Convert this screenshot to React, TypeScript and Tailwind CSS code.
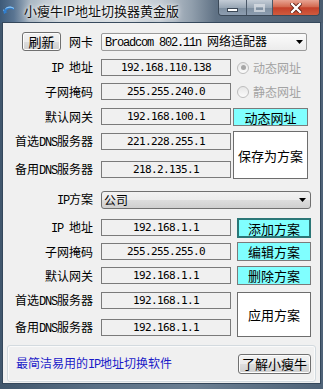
import React from "react";

const Latin = ({ children }: { children: React.ReactNode }) => (
  <span className="font-['Liberation_Mono',monospace] text-[12px] tracking-[-1.2px]">{children}</span>
);

const Field = ({ value }: { value: string }) => (
  <div className="ml-[8px] w-[130px] h-[17px] border border-[#7a7a7a] bg-[#f0f0f0] flex items-center justify-center font-['DejaVu_Sans_Mono',monospace] text-[11px] tracking-[-0.62px] text-black leading-none">
    {value}
  </div>
);

const Row = ({ label, value, className = "" }: { label: React.ReactNode; value: string; className?: string }) => (
  <div className={"flex items-center h-[17px] " + className}>
    <div className="w-[90px] text-right text-[12px] leading-none text-black whitespace-nowrap">{label}</div>
    <Field value={value} />
  </div>
);

const Radio = ({ checked, label, className = "" }: { checked: boolean; label: string; className?: string }) => (
  <div className={"flex items-center h-[17px] " + className}>
    <div className="ml-[4px] w-[12px] h-[12px] rounded-full border border-[#bdbdbd] bg-[linear-gradient(#e6e6e6,#fbfbfb)] flex items-center justify-center">
      {checked && <div className="w-[5px] h-[5px] rounded-full bg-[#a6a6a6]" />}
    </div>
    <div className="ml-[4px] text-[12px] leading-none text-[#a3a3a3] whitespace-nowrap">{label}</div>
  </div>
);

const winBtn =
  "rounded-[3px] border border-[#707070] bg-[linear-gradient(#f2f2f2_0%,#ebebeb_50%,#dddddd_50%,#cfcfcf_100%)] shadow-[inset_0_0_0_1px_#fcfcfc]";

const Arrow = () => (
  <svg width="7" height="4" viewBox="0 0 7 4">
    <polygon points="0,0 7,0 3.5,4" fill="#000" />
  </svg>
);

export default function App() {
  return (
    <div className="w-[323px] h-[389px] overflow-hidden bg-[linear-gradient(90deg,#41576d,#5a7086_30%,#6b7f93_60%,#4f6378)] font-['Noto_Sans_CJK_SC','Noto_Sans',sans-serif]">
      {/* Title bar */}
      <div className="h-[23px] flex items-start bg-[linear-gradient(90deg,#3d5a78_0px,#5a7592_14px,#aab7c3_30px,#d3d9de_60px,#d8dde1_120px,#c3cbd3_160px,#909eac_192px,#5f7184_216px,#4b5d70_323px)]">
        <div className="ml-[3px] mt-[6px] w-[12px] h-[10px]">
          <svg width="12" height="10" viewBox="0 0 12 10">
            <path d="M11 2 C8 -0.5 3 0 1.5 4 L0 3.5 L1 8 L4.5 6 L3 5.5 C4.5 2.5 8 2 11 4 Z" fill="#2f7fd0" />
            <path d="M11 2 C8 -0.5 3 0 1.5 4 L0 3.5 L0.5 5 C3 1.5 8 1 11 3 Z" fill="#8fc6f2" />
          </svg>
        </div>
        <div className="ml-[9px] mt-[3px] text-[13px] leading-[16px] text-[#111] whitespace-nowrap [text-shadow:0_0_6px_#ffffff,0_0_3px_#ffffff]">
          小瘦牛IP地址切换器黄金版
        </div>
        <div className="flex-1" />
        <div className="mr-[3px] flex h-[16px] rounded-b-[4px] border border-t-0 border-[#3b4958] overflow-hidden">
          <div className="w-[28px] h-full bg-[linear-gradient(#c3ccd6,#9aa8b6_50%,#7e8fa0_51%,#8d9db0)] border-r border-[#4a5868] flex items-center justify-center">
            <div className="mt-[4px] w-[11px] h-[4px] bg-white border border-[#3c4856]" />
          </div>
          <div className="w-[26px] h-full bg-[linear-gradient(#c3ccd6,#9aa8b6_50%,#7e8fa0_51%,#8d9db0)] border-r border-[#4a5868] flex items-center justify-center">
            <div className="w-[11px] h-[8px] border-2 border-t-[3px] border-[#dfe4ea] opacity-70" />
          </div>
          <div className="w-[46px] h-full bg-[linear-gradient(#e8a493,#d46a51_45%,#c4402a_52%,#cf5b3e)] flex items-center justify-center">
            <svg width="12" height="10" viewBox="0 0 12 10">
              <path d="M2 1 L10 9 M10 1 L2 9" stroke="#5a1a10" strokeWidth="4" strokeLinecap="square" />
              <path d="M2 1 L10 9 M10 1 L2 9" stroke="#ffffff" strokeWidth="2.4" strokeLinecap="square" />
            </svg>
          </div>
        </div>
      </div>

      {/* Client area */}
      <div className="px-[3px]">
        <div className="w-[317px] h-[360px] bg-[#f0f0f0] shadow-[0_0_0_1px_#34475b] flex flex-col">
          {/* Row 0 */}
          <div className="mt-[9px] flex items-center h-[19px]">
            <div className={"ml-[19px] w-[39px] h-[19px] flex items-center justify-center text-[13px] leading-none text-black " + winBtn}>
              刷新
            </div>
            <div className="w-[32px] text-right text-[12px] leading-none text-black">网卡</div>
            <div className="ml-[8px] w-[206px] h-[18px] rounded-[2px] border border-[#9a9a9a] bg-[linear-gradient(#fbfbfb,#ececec)] flex items-center pl-[3px] pr-[3px]">
              <span className="text-[12px] leading-none text-black whitespace-nowrap">
                <Latin>Broadcom 802.11n </Latin>网络适配器
              </span>
              <div className="flex-1" />
              <Arrow />
            </div>
          </div>

          {/* Section 1 */}
          <div className="mt-[8px] flex">
            <div className="flex flex-col">
              <Row label={<><Latin>IP </Latin>地址</>} value="192.168.110.138" />
              <Row className="mt-[7px]" label="子网掩码" value="255.255.240.0" />
              <Row className="mt-[8px]" label="默认网关" value="192.168.100.1" />
              <Row className="mt-[8px]" label={<>首选<Latin>DNS</Latin>服务器</>} value="221.228.255.1" />
              <Row className="mt-[11px]" label={<>备用<Latin>DNS</Latin>服务器</>} value="218.2.135.1" />
            </div>
            <div className="ml-[2px] w-[75px] flex flex-col">
              <Radio checked label="动态网址" />
              <Radio className="mt-[7px]" checked={false} label="静态网址" />
              <div className="mt-[8px] h-[18px] bg-[#80ffff] border border-[#7a7a7a] flex items-center justify-center text-[13px] leading-none text-black">
                动态网址
              </div>
              <div className="mt-[5px] h-[48px] bg-white border border-[#6d6d6d] flex items-center justify-center text-[13px] leading-none text-black">
                保存为方案
              </div>
            </div>
          </div>

          {/* IP scheme combo */}
          <div className="mt-[12px] flex items-center h-[18px]">
            <div className="w-[90px] text-right text-[12px] leading-none text-black">
              <Latin>IP</Latin>方案
            </div>
            <div className="ml-[8px] w-[210px] h-[18px] rounded-[3px] border border-[#707070] bg-[linear-gradient(#f2f2f2_0%,#ebebeb_50%,#dddddd_50%,#cfcfcf_100%)] flex items-center pl-[2px] pr-[4px]">
              <span className="text-[12px] leading-none text-black">公司</span>
              <div className="flex-1" />
              <Arrow />
            </div>
          </div>

          {/* Section 2 */}
          <div className="mt-[9px] flex">
            <div className="pt-[1px] flex flex-col">
              <Row label={<><Latin>IP </Latin>地址</>} value="192.168.1.1" />
              <Row className="mt-[7px]" label="子网掩码" value="255.255.255.0" />
              <Row className="mt-[7px]" label="默认网关" value="192.168.1.1" />
              <Row className="mt-[8px]" label={<>首选<Latin>DNS</Latin>服务器</>} value="192.168.1.1" />
              <Row className="mt-[10px]" label={<>备用<Latin>DNS</Latin>服务器</>} value="192.168.1.1" />
            </div>
            <div className="ml-[6px] w-[74px] flex flex-col">
              <div className="h-[20px] bg-[#80ffff] border-2 border-[#2b7676] flex items-center justify-center text-[13px] leading-none text-black">
                添加方案
              </div>
              <div className="mt-[4px] h-[19px] bg-[#80ffff] border border-[#7a7a7a] flex items-center justify-center text-[13px] leading-none text-black">
                编辑方案
              </div>
              <div className="mt-[5px] h-[19px] bg-[#80ffff] border border-[#7a7a7a] flex items-center justify-center text-[13px] leading-none text-black">
                删除方案
              </div>
              <div className="mt-[7px] h-[45px] bg-white border border-[#6d6d6d] flex items-center justify-center text-[13px] leading-none text-black">
                应用方案
              </div>
            </div>
          </div>

          {/* Bottom group box */}
          <div className="mt-[8px] ml-[4px] w-[309px] h-[37px] rounded-[3px] border border-[#d3dadf] shadow-[inset_0_0_0_1px_#fafafa] flex items-center pl-[8px] pr-[4px]">
            <div className="text-[12px] leading-none text-[#1a1ac8] whitespace-nowrap">
              最简洁易用的<Latin>IP</Latin>地址切换软件
            </div>
            <div className="flex-1" />
            <div className={"w-[73px] h-[20px] flex items-center justify-center text-[13px] leading-none text-black " + winBtn}>
              了解小瘦牛
            </div>
          </div>
        </div>
      </div>
    </div>
  );
}
